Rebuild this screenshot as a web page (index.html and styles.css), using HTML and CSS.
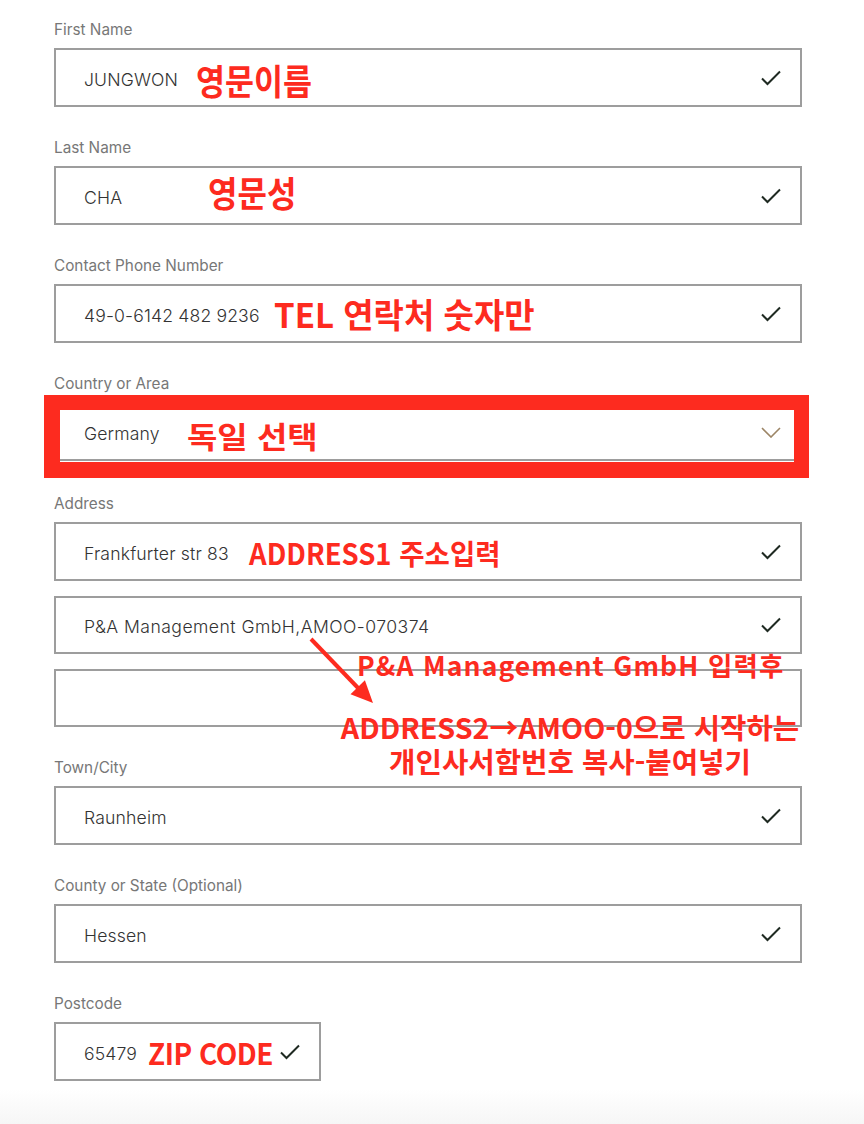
FILE: index.html
```html
<!DOCTYPE html>
<html lang="ko">
<head>
<meta charset="utf-8">
<title>Address form</title>
<link rel="stylesheet" href="styles.css">
</head>
<body>
<div class="sheet">
  <form class="form">
    <div class="field">
      <div class="label">First Name</div>
      <div class="box">
        <span class="value">JUNGWON</span>
        <span class="note n-first">영문이름</span>
        <svg class="check" viewBox="0 0 20 16" width="20" height="16"><path d="M1 8.5 L6.5 14 L19 1.5"/></svg>
      </div>
    </div>
    <div class="field">
      <div class="label">Last Name</div>
      <div class="box">
        <span class="value">CHA</span>
        <span class="note n-last">영문성</span>
        <svg class="check" viewBox="0 0 20 16" width="20" height="16"><path d="M1 8.5 L6.5 14 L19 1.5"/></svg>
      </div>
    </div>
    <div class="field">
      <div class="label">Contact Phone Number</div>
      <div class="box">
        <span class="value">49-0-6142 482 9236</span>
        <span class="note n-tel">TEL 연락처 숫자만</span>
        <svg class="check" viewBox="0 0 20 16" width="20" height="16"><path d="M1 8.5 L6.5 14 L19 1.5"/></svg>
      </div>
    </div>
    <div class="field field-select">
      <div class="label">Country or Area</div>
      <div class="box">
        <span class="value">Germany</span>
        <span class="note n-country">독일 선택</span>
        <svg class="chevron" viewBox="0 0 20 11" width="20" height="11"><path d="M1 1 L10 10 L19 1"/></svg>
        <span class="highlight"></span>
      </div>
    </div>
    <div class="field">
      <div class="label">Address</div>
      <div class="stack">
        <div class="box">
          <span class="value">Frankfurter str 83</span>
          <span class="note n-addr1">ADDRESS1 주소입력</span>
          <svg class="check" viewBox="0 0 20 16" width="20" height="16"><path d="M1 8.5 L6.5 14 L19 1.5"/></svg>
        </div>
        <div class="box box-short">
          <span class="value value-long">P&amp;A Management GmbH,AMOO-070374</span>
          <svg class="check" viewBox="0 0 20 16" width="20" height="16"><path d="M1 8.5 L6.5 14 L19 1.5"/></svg>
        </div>
        <div class="box box-short"></div>
      </div>
    </div>
    <div class="field">
      <div class="label">Town/City</div>
      <div class="box">
        <span class="value">Raunheim</span>
        <svg class="check" viewBox="0 0 20 16" width="20" height="16"><path d="M1 8.5 L6.5 14 L19 1.5"/></svg>
      </div>
    </div>
    <div class="field">
      <div class="label">County or State (Optional)</div>
      <div class="box">
        <span class="value">Hessen</span>
        <svg class="check" viewBox="0 0 20 16" width="20" height="16"><path d="M1 8.5 L6.5 14 L19 1.5"/></svg>
      </div>
    </div>
    <div class="field field-last">
      <div class="label">Postcode</div>
      <div class="box box-post">
        <span class="value">65479</span>
        <span class="note n-zip">ZIP CODE</span>
        <svg class="check" viewBox="0 0 20 16" width="20" height="16"><path d="M1 8.5 L6.5 14 L19 1.5"/></svg>
      </div>
    </div>
  </form>
  <div class="fade"></div>

  <div class="note n-pa">P&amp;A Management GmbH 입력후</div>
  <div class="note n-amoo">ADDRESS2→AMOO-0으로 시작하는<br>개인사서함번호 복사-붙여넣기</div>
  <svg class="arrow" viewBox="0 0 90 80" width="90" height="80">
    <line x1="11" y1="9" x2="60" y2="60"/>
    <polygon points="73,73 50.5,64.2 64.9,50.2"/>
  </svg>
</div>
</body>
</html>
```

FILE: styles.css
```css
html, body {
  margin: 0;
  padding: 0;
  background: #ffffff;
}

.sheet {
  position: relative;
  width: 864px;
  min-height: 1124px;
  font-family: "Inter", "Liberation Sans", sans-serif;
}

.form {
  display: flex;
  flex-direction: column;
  padding: 20px 0 0 54px;
  width: 748px;
}

.field {
  display: flex;
  flex-direction: column;
  margin-bottom: 31px;
}

.field-select {
  margin-bottom: 33px;
}

.field-last {
  margin-bottom: 0;
}

.label {
  font-size: 15.3px;
  line-height: 20px;
  color: #777777;
  margin-bottom: 8px;
}

.stack {
  display: flex;
  flex-direction: column;
  gap: 15px;
}

.box {
  position: relative;
  box-sizing: border-box;
  height: 59px;
  border: 2px solid #9d9d9d;
  background: #fff;
  display: flex;
  align-items: center;
  padding: 0 19px 0 28px;
}

.box-short {
  height: 58px;
}

.box-post {
  width: 267px;
}

.value {
  font-size: 17.6px;
  font-weight: 300;
  color: #333333;
  white-space: nowrap;
  margin-top: 3px;
  letter-spacing: 0.15px;
}

.value-long {
  letter-spacing: 0.45px;
}

.check {
  margin-left: auto;
  flex: none;
}

.check path {
  fill: none;
  stroke: #1f2a22;
  stroke-width: 2;
}

.chevron {
  margin-left: auto;
  margin-top: 2px;
  flex: none;
}

.chevron path {
  fill: none;
  stroke: #9c8566;
  stroke-width: 1.6;
}

.highlight {
  position: absolute;
  left: -12px;
  top: -9px;
  width: 765px;
  height: 83px;
  box-sizing: border-box;
  border-style: solid;
  border-color: #fd2b1f;
  border-width: 15px 15px 16px 16px;
}

.note {
  font-family: "Noto Sans CJK KR", "Noto Sans", sans-serif;
  font-weight: 700;
  color: #fd2b1f;
  line-height: 1;
  white-space: nowrap;
}

.box .note {
  position: absolute;
  top: 50%;
}

.n-first {
  left: 140px;
  font-size: 31.5px;
  transform: translateY(-42%) scaleY(1.12);
}

.n-last {
  left: 152px;
  font-size: 32px;
  transform: translateY(-64%) scaleY(1.1);
}

.n-tel {
  left: 218px;
  font-size: 33px;
  transform: translateY(-50%) scaleY(1.02);
}

.n-country {
  left: 131px;
  font-size: 33px;
  transform: translateY(-38%) scaleY(0.9);
}

.n-addr1 {
  left: 193px;
  font-size: 27.5px;
  transform: translateY(-46%) scaleY(1.05);
}

.n-zip {
  left: 92px;
  font-size: 28px;
  letter-spacing: -0.5px;
  transform: translateY(-48%) scaleY(1.04);
}

.n-pa {
  position: absolute;
  left: 357px;
  top: 652px;
  font-size: 26.5px;
  letter-spacing: 1.1px;
}

.n-amoo {
  position: absolute;
  left: 270px;
  top: 710px;
  width: 600px;
  text-align: center;
  font-size: 28.7px;
  line-height: 34px;
}

.arrow {
  position: absolute;
  left: 300px;
  top: 630px;
}

.arrow line {
  stroke: #fd2b1f;
  stroke-width: 4;
}

.arrow polygon {
  fill: #fd2b1f;
}

.fade {
  height: 36px;
  margin-top: 8px;
  background: linear-gradient(#ffffff, #f6f6f6);
}
```
